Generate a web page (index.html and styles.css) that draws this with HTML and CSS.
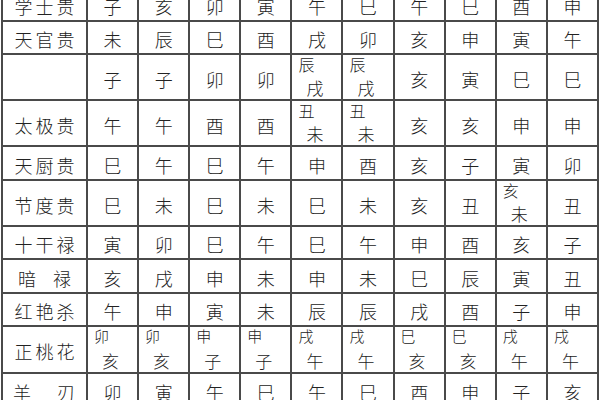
FILE: index.html
```html
<!DOCTYPE html>
<html lang="zh-CN">
<head>
<meta charset="utf-8">
<title>神煞表</title>
<link rel="stylesheet" href="styles.css">
</head>
<body>
<div class="sheet">
  <div class="lab">学士贵</div><div class="c">子</div><div class="c">亥</div><div class="c">卯</div><div class="c">寅</div><div class="c">午</div><div class="c">巳</div><div class="c">午</div><div class="c">巳</div><div class="c">酉</div><div class="c">申</div>

  <div class="lab">天官贵</div><div class="c">未</div><div class="c">辰</div><div class="c">巳</div><div class="c">酉</div><div class="c">戌</div><div class="c">卯</div><div class="c">亥</div><div class="c">申</div><div class="c">寅</div><div class="c">午</div>

  <div class="lab"></div><div class="c">子</div><div class="c">子</div><div class="c">卯</div><div class="c">卯</div><div class="c st"><span class="t">辰</span><span class="b">戌</span></div><div class="c st"><span class="t">辰</span><span class="b">戌</span></div><div class="c">亥</div><div class="c">寅</div><div class="c">巳</div><div class="c">巳</div>

  <div class="lab">太极贵</div><div class="c">午</div><div class="c">午</div><div class="c">酉</div><div class="c">酉</div><div class="c st"><span class="t">丑</span><span class="b">未</span></div><div class="c st"><span class="t">丑</span><span class="b">未</span></div><div class="c">亥</div><div class="c">亥</div><div class="c">申</div><div class="c">申</div>

  <div class="lab">天厨贵</div><div class="c">巳</div><div class="c">午</div><div class="c">巳</div><div class="c">午</div><div class="c">申</div><div class="c">酉</div><div class="c">亥</div><div class="c">子</div><div class="c">寅</div><div class="c">卯</div>

  <div class="lab">节度贵</div><div class="c">巳</div><div class="c">未</div><div class="c">巳</div><div class="c">未</div><div class="c">巳</div><div class="c">未</div><div class="c">亥</div><div class="c">丑</div><div class="c st"><span class="t">亥</span><span class="b">未</span></div><div class="c">丑</div>

  <div class="lab">十干禄</div><div class="c">寅</div><div class="c">卯</div><div class="c">巳</div><div class="c">午</div><div class="c">巳</div><div class="c">午</div><div class="c">申</div><div class="c">酉</div><div class="c">亥</div><div class="c">子</div>

  <div class="lab gap1">暗 禄</div><div class="c">亥</div><div class="c">戌</div><div class="c">申</div><div class="c">未</div><div class="c">申</div><div class="c">未</div><div class="c">巳</div><div class="c">辰</div><div class="c">寅</div><div class="c">丑</div>

  <div class="lab">红艳杀</div><div class="c">午</div><div class="c">申</div><div class="c">寅</div><div class="c">未</div><div class="c">辰</div><div class="c">辰</div><div class="c">戌</div><div class="c">酉</div><div class="c">子</div><div class="c">申</div>

  <div class="lab">正桃花</div><div class="c st sm"><span class="t">卯</span><span class="b">亥</span></div><div class="c st sm"><span class="t">卯</span><span class="b">亥</span></div><div class="c st sm"><span class="t">申</span><span class="b">子</span></div><div class="c st sm"><span class="t">申</span><span class="b">子</span></div><div class="c st sm"><span class="t">戌</span><span class="b">午</span></div><div class="c st sm"><span class="t">戌</span><span class="b">午</span></div><div class="c st sm"><span class="t">巳</span><span class="b">亥</span></div><div class="c st sm"><span class="t">巳</span><span class="b">亥</span></div><div class="c st sm"><span class="t">戌</span><span class="b">午</span></div><div class="c st sm"><span class="t">戌</span><span class="b">午</span></div>

  <div class="lab gap2">羊　刃</div><div class="c">卯</div><div class="c">寅</div><div class="c">午</div><div class="c">巳</div><div class="c">午</div><div class="c">巳</div><div class="c">酉</div><div class="c">申</div><div class="c">子</div><div class="c">亥</div>
</div>
</body>
</html>
```

FILE: styles.css
```css
html, body {
  margin: 0;
  padding: 0;
  background: #ffffff;
  overflow: hidden;
}

body {
  width: 600px;
  height: 400px;
  font-family: "Noto Sans CJK SC", "Noto Sans", sans-serif;
  color: #222222;
}

.sheet {
  display: grid;
  grid-template-columns: 83px repeat(10, 1fr);
  grid-template-rows: 32px 31px 44px 44px 32px 44px 31px 32px 31px 45px 32px;
  gap: 2px;
  width: 594px;
  margin: -14px 0 0 1px;
  border: 2px solid #4a4a4a;
  background: #4a4a4a;
}

.lab,
.c {
  background: #ffffff;
  display: flex;
  align-items: center;
  justify-content: center;
  box-sizing: border-box;
  padding-top: 3px;
  font-weight: 300;
}

.lab {
  font-size: 18px;
  line-height: 20px;
  letter-spacing: 3px;
  padding-left: 3px;
  white-space: pre;
}

.gap1 {
  word-spacing: 7px;
}

.gap2 {
  letter-spacing: 4px;
}

.c {
  font-size: 18px;
  line-height: 20px;
}

.st {
  flex-direction: column;
  align-items: flex-start;
  justify-content: space-between;
  padding-top: 0;
}

.st .t {
  font-size: 16px;
  line-height: 18px;
  padding-left: 6px;
}

.st .b {
  font-size: 17px;
  line-height: 22px;
  padding-left: 14px;
}

.sm .t {
  font-size: 15px;
}
```
